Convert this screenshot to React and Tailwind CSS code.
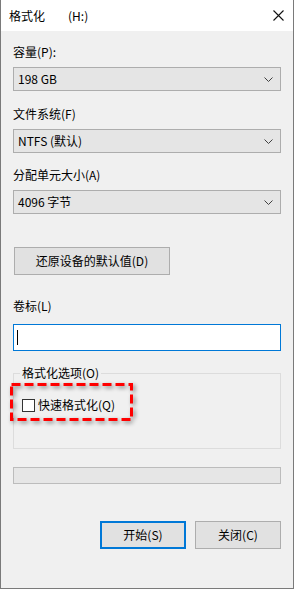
/**
 * Format dialog (Windows 10 style) with annotation box on quick-format
 */

const font = { fontFamily: '"Noto Sans CJK SC", "Noto Sans", sans-serif' };

function Chevron() {
  return (
    <svg width="9" height="5" viewBox="0 0 9 5" className="shrink-0">
      <path d="M0.5 0.5 L4.5 4.5 L8.5 0.5" fill="none" stroke="#404040" strokeWidth="1" />
    </svg>
  );
}

function Select({ value }) {
  return (
    <div className="mx-[12px] h-[24px] bg-[#e5e5e5] border border-[#adadad] flex items-center justify-between pl-[4px] pr-[7px]">
      <span className="text-[12px] leading-[16px] text-black">{value}</span>
      <Chevron />
    </div>
  );
}

function Label({ children, className = '' }) {
  return (
    <div className={`mx-[12px] h-[16px] text-[12px] leading-[16px] text-black ${className}`}>{children}</div>
  );
}

export default function App() {
  return (
    <div
      className="w-[294px] h-[589px] bg-[#f0f0f0] border-x border-b border-[#7a7a7a] flex flex-col overflow-hidden"
      style={font}
    >
      {/* Title bar */}
      <div className="h-[31px] shrink-0 bg-white flex items-center pl-[8px] pr-[9px]">
        <span className="text-[12px] leading-[16px] text-black">格式化</span>
        <span className="text-[12px] leading-[16px] text-black ml-[23px]">(H:)</span>
        <svg width="11" height="11" viewBox="0 0 11 11" className="ml-auto">
          <path d="M0.5 0.5 L10.5 10.5 M10.5 0.5 L0.5 10.5" stroke="#111" strokeWidth="1.1" />
        </svg>
      </div>

      <Label className="mt-[13px]">容量(P):</Label>
      <div className="mt-[7px]"><Select value="198 GB" /></div>

      <Label className="mt-[15px]">文件系统(F)</Label>
      <div className="mt-[7px]"><Select value="NTFS (默认)" /></div>

      <Label className="mt-[14px]">分配单元大小(A)</Label>
      <div className="mt-[7px]"><Select value="4096 字节" /></div>

      <button className="mt-[33px] ml-[13px] w-[156px] h-[28px] bg-[#e1e1e1] border border-[#adadad] text-[12px] text-black">
        还原设备的默认值(D)
      </button>

      <Label className="mt-[23px]">卷标(L)</Label>
      <div className="mt-[10px] mx-[12px] h-[27px] bg-white border border-[#0078d7] flex items-center pl-[3px]">
        <div className="w-px h-[15px] bg-black" />
      </div>

      {/* Options group */}
      <div className="relative">
        <fieldset className="mt-[14px] mx-[12px] h-[84px] border border-[#dcdcdc]">
          <legend className="ml-[6px] px-[2px] text-[12px] leading-[16px] text-black">格式化选项(O)</legend>
          <div className="mt-[16px] ml-[8px] flex items-center">
            <div className="w-[13px] h-[13px] bg-white border border-[#333]" />
            <span className="ml-[3px] text-[12px] leading-[16px] text-black">快速格式化(Q)</span>
          </div>
        </fieldset>

        {/* Annotation */}
        <svg
          width="130"
          height="46"
          className="absolute left-[7px] top-[30px]"
          style={{ filter: 'drop-shadow(2px 2px 2px rgba(0,0,0,0.45))' }}
        >
          <rect x="3.5" y="3.5" width="120" height="35" fill="none" stroke="#ff0000" strokeWidth="3" strokeDasharray="9 4" />
        </svg>
      </div>

      <div className="mt-[18px] mx-[12px] h-[17px] bg-[#e6e6e6] border border-[#bcbcbc]" />

      <div className="mt-[37px] mx-[12px] flex justify-end gap-[9px]">
        <button className="w-[86px] h-[28px] bg-[#e1e1e1] border-2 border-[#0078d7] text-[12px] text-black">
          开始(S)
        </button>
        <button className="w-[86px] h-[28px] bg-[#e1e1e1] border border-[#adadad] text-[12px] text-black">
          关闭(C)
        </button>
      </div>
    </div>
  );
}
